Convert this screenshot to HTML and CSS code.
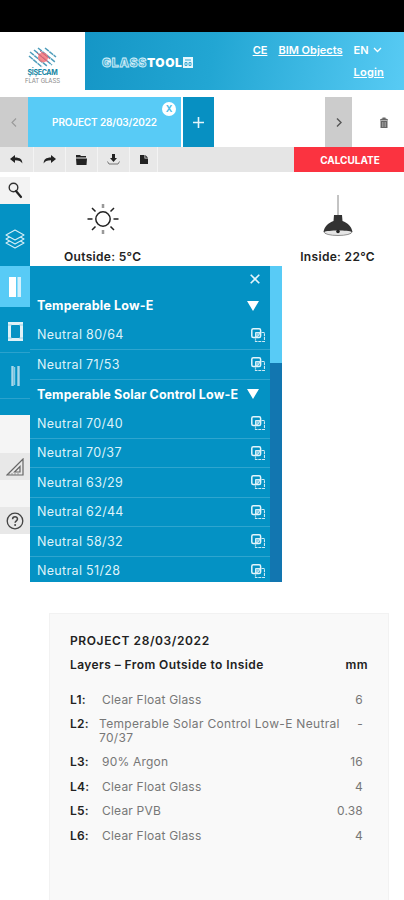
FILE: index.html
```
<!DOCTYPE html>
<html lang="en">

<head>
    <meta charset="utf-8">
    <title>Glasstool</title>
    <link rel="stylesheet" href="styles.css">
</head>

<body>
    <!-- shared icon for the glass rows -->
    <svg class="sprite" aria-hidden="true">
        <symbol id="add-layer" viewBox="0 0 14 14">
            <path d="M10.500 4.500h3v9h-9v-3" fill="none" stroke="#cfeaf5" stroke-width="1.2" stroke-dasharray="3 .8"/>
            <rect x=".8" y=".8" width="8.8" height="8.8" rx="1.500" fill="none" stroke="#e4f5fb" stroke-width="1.5"/>
            <path d="M4.500 9V4.500H9L7.500 8z" fill="#8acde6" stroke="#d5eff8"/>
        </symbol>
    </svg>

    <div class="status-bar"></div>

    <header class="header">
        <a class="brand">
            <svg width="30" height="21" viewBox="0 0 30 21">
                <g fill="none" stroke="#4e9dbb" stroke-width="1.5" stroke-dasharray="5 .6">
                    <path d="M1 9l13 11M2 5l17 14M6 3l18 15M10 1l17 14M17 1l11 9"/>
                </g>
                <circle cx="15" cy="10.500" r="5" fill="#f47579" opacity=".85"/>
                <path d="M9 6l11 9M12 4l10 8" stroke="#cf5f79" stroke-width="1"/>
            </svg>
            <span class="brand-name">ŞİŞECAM</span>
            <span class="brand-sub">FLAT GLASS</span>
        </a>
        <div class="banner">
            <div class="product"><span class="product-outline">GLASS</span><span class="product-solid">TOOL</span>
                <svg width="10" height="11" viewBox="0 0 10 11"><path d="M0 0h10v11H0z" fill="#e7f7fd"/><path d="M2 3h6M2 5.500h2v3H2zM6 5.500h2v3H6z" fill="none" stroke="#38a9d1"/></svg>
            </div>
            <nav class="nav">
                <a class="nav-link">CE</a>
                <a class="nav-link">BIM Objects</a>
                <span class="lang">EN <svg width="9" height="6" viewBox="0 0 9 6"><path d="M1 1l3.500 3.500L8 1" fill="none" stroke="#fff" stroke-width="1.3"/></svg></span>
                <a class="nav-link login">Login</a>
            </nav>
        </div>
    </header>

    <div class="tabs">
        <button class="tab-arrow prev"><svg width="6" height="9" viewBox="0 0 6 9"><path d="M5 .5l-4 4 4 4" fill="none" stroke="#999" stroke-width="1.1"/></svg></button>
        <div class="tab"><span class="tab-name">PROJECT 28/03/2022</span><span class="tab-close">X</span></div>
        <button class="tab-add"><svg width="11" height="11" viewBox="0 0 11 11"><path d="M5.500 0v11M0 5.500h11" stroke="#e5f5fb" stroke-width="1.6"/></svg></button>
        <button class="tab-arrow next"><svg width="6" height="9" viewBox="0 0 6 9"><path d="M1 .5l4 4-4 4" fill="none" stroke="#555" stroke-width="1.4"/></svg></button>
        <button class="trash"><svg width="8" height="11" viewBox="0 0 8 11"><path d="M2.500 1.500V.5h3v1M0 3.500V2.500q4-2.500 8 0v1zM.5 4h7v7h-7z" fill="#666"/><path d="M2.500 5v5M4 5v5M5.500 5v5" stroke="#aaa" stroke-width=".7"/></svg></button>
    </div>

    <div class="toolbar">
        <button class="tool"><svg width="13" height="9" viewBox="0 0 13 9"><path d="M0 4L5 0v2.500c5 0 7.500 2 7.300 6C11 6 9 5.300 5 5.300V8z" fill="#222"/></svg></button>
        <button class="tool"><svg width="13" height="9" viewBox="0 0 13 9"><path d="M13 4L8 0v2.500C3 2.500.5 4.500.7 8.500 2 6 4 5.300 8 5.300V8z" fill="#222"/></svg></button>
        <button class="tool"><svg width="11" height="10" viewBox="0 0 11 10"><path d="M0 0h4l1 1h5v1.500H0zM0 3.500h11L10.500 10H.5z" fill="#222"/></svg></button>
        <button class="tool"><svg width="13" height="11" viewBox="0 0 13 11"><path d="M5 0h3v4h2L6.500 8 3 4h2z" fill="#222"/><path d="M.5 7.500L2 10h9l1.500-2.500" fill="none" stroke="#777"/></svg></button>
        <button class="tool small"><svg width="8" height="9" viewBox="0 0 8 9"><path d="M0 0h4.500v3.500H8V9H0zM5.300 0L8 2.700H5.300z" fill="#222"/></svg></button>
        <button class="calculate">CALCULATE</button>
    </div>

    <div class="workspace">
        <aside class="sidebar">
            <div class="side search"><svg width="15" height="17" viewBox="0 0 15 17"><circle cx="5.500" cy="5.500" r="4.300" fill="none" stroke="#333" stroke-width="1.4"/><path d="M8 9l5 6" stroke="#222" stroke-width="2.200" stroke-linecap="round"/></svg></div>
            <div class="side layers"><svg width="20" height="20" viewBox="0 0 20 20"><g fill="#0492c4" stroke="#d5eef7" stroke-width="1.1" stroke-linejoin="round"><path d="M1 14l9-5 9 5-9 5z"/><path d="M1 10l9-5 9 5-9 5z"/><path d="M1 6l9-5 9 5-9 5z"/></g></svg></div>
            <div class="side active"><svg width="12" height="20" viewBox="0 0 12 20"><path d="M0 0h7v20H0z" fill="#fff"/><path d="M8.500 0H12v20H8.500z" fill="#d4f1fd"/></svg></div>
            <div class="side window"><svg width="15" height="19" viewBox="0 0 15 19"><path d="M1.500 1.500h12v16h-12z" fill="none" stroke="#dff1f7" stroke-width="3"/><path d="M0 3h4M11 3h4M0 16h4M11 16h4" stroke="#8ccbe2" stroke-width=".8"/></svg></div>
            <div class="side"><svg width="9" height="20" viewBox="0 0 9 20"><path d="M1.500 0v20M7.500 0v20" stroke="#a8d7e9" stroke-width="2.400"/><path d="M3.700 1v18" stroke="#d7eef7" stroke-width=".8"/></svg></div>
            <div class="side-end"></div>
            <div class="side-gap first"></div>
            <div class="side gray"><svg width="18" height="18" viewBox="0 0 18 18"><path d="M1 17L17 1v16zM8.500 14L14 8.500V14z" fill="none" stroke="#666" stroke-width="1.2"/><path d="M3 17v-2M6 17v-2M9 17v-2M12 17v-2" stroke="#888" stroke-width=".8"/></svg></div>
            <div class="side-gap"></div>
            <div class="side gray"><svg width="18" height="18" viewBox="0 0 18 18"><circle cx="9" cy="9" r="7.800" fill="none" stroke="#444" stroke-width="1.3"/><path d="M6.600 7.200c0-3.200 4.900-3.100 4.900-.2 0 1.800-2.400 1.900-2.400 3.800" fill="none" stroke="#444" stroke-width="1.500"/><circle cx="9.100" cy="13" r="1" fill="#444"/></svg></div>
        </aside>

        <main class="main">
            <div class="climate">
                <div class="side-info outside">
                    <svg width="32" height="32" viewBox="0 0 32 32">
                        <circle cx="16" cy="16" r="7.200" fill="none" stroke="#222" stroke-width="1.500"/>
                        <path d="M.5 16h5M26.500 16h5M5 5l3.500 3.500M27 5l-3.500 3.500M5 27l3.500-3.500M27 27l-3.500-3.500" stroke="#222" stroke-width="1.500"/>
                        <path d="M16 1v4M16 27v4" stroke="#999" stroke-width="2.500"/>
                    </svg>
                    <span>Outside: 5°C</span>
                </div>
                <div class="side-info inside">
                    <svg width="30" height="42" viewBox="0 0 30 42">
                        <path d="M15 0v21" stroke="#888"/>
                        <ellipse cx="15" cy="37" rx="14" ry="3.500" fill="#e5e5e5" stroke="#777" stroke-width=".8"/>
                        <path d="M11 20h8l.5 6c5 2 9 5 10 11-5-2-24-2-29 0 1-6 5-9 10-11z" fill="#333"/>
                        <circle cx="15" cy="36.500" r="1.800" fill="#222"/>
                    </svg>
                    <span>Inside: 22°C</span>
                </div>
            </div>

            <div class="panel">
                <div class="panel-list">
                    <div class="panel-close"><svg width="10" height="10" viewBox="0 0 10 10"><path d="M.7.7l8.600 8.600M9.300.7L.7 9.300" stroke="#e5f5fb" stroke-width="1.600"/></svg></div>
                    <div class="group">Temperable Low-E<i class="caret"></i></div>
                    <div class="item">Neutral 80/64<svg class="add"><use href="#add-layer"/></svg></div>
                    <div class="item">Neutral 71/53<svg class="add"><use href="#add-layer"/></svg></div>
                    <div class="group">Temperable Solar Control Low-E<i class="caret"></i></div>
                    <div class="item">Neutral 70/40<svg class="add"><use href="#add-layer"/></svg></div>
                    <div class="item">Neutral 70/37<svg class="add"><use href="#add-layer"/></svg></div>
                    <div class="item">Neutral 63/29<svg class="add"><use href="#add-layer"/></svg></div>
                    <div class="item">Neutral 62/44<svg class="add"><use href="#add-layer"/></svg></div>
                    <div class="item">Neutral 58/32<svg class="add"><use href="#add-layer"/></svg></div>
                    <div class="item">Neutral 51/28<svg class="add"><use href="#add-layer"/></svg></div>
                </div>
                <div class="scrollbar"><div class="thumb"></div></div>
            </div>

            <section class="summary">
                <h1 class="summary-title">PROJECT 28/03/2022</h1>
                <div class="summary-head"><span class="summary-label">Layers – From Outside to Inside</span><span class="unit">mm</span></div>
                <div class="layer"><b>L1:</b><span class="name">Clear Float Glass</span><span class="mm">6</span></div>
                <div class="layer long"><b>L2:</b><span class="name">Temperable Solar Control Low-E Neutral<br>70/37</span><span class="mm">-</span></div>
                <div class="layer"><b>L3:</b><span class="name">90% Argon</span><span class="mm">16</span></div>
                <div class="layer"><b>L4:</b><span class="name">Clear Float Glass</span><span class="mm">4</span></div>
                <div class="layer"><b>L5:</b><span class="name">Clear PVB</span><span class="mm">0.38</span></div>
                <div class="layer"><b>L6:</b><span class="name">Clear Float Glass</span><span class="mm">4</span></div>
            </section>
        </main>
    </div>
</body>

</html>
```
FILE: styles.css
```
* {
    box-sizing: border-box;
}

body {
    margin: 0;
    height: 900px;
    overflow: hidden;
    display: flex;
    flex-direction: column;
    background: #fff;
    color: #222;
    font-family: Inter, "Liberation Sans", sans-serif;
    font-size: 12px;
}

svg {
    display: block;
    flex-shrink: 0;
}

button {
    border: 0;
    padding: 0;
    font-family: inherit;
    display: flex;
    align-items: center;
    justify-content: center;
}

.sprite {
    width: 0;
    height: 0;
    position: absolute;
}

.status-bar {
    height: 32px;
    background: #000;
    flex-shrink: 0;
}

/* header */
.header {
    display: flex;
    height: 58px;
    margin-bottom: 7px;
    flex-shrink: 0;
}

.brand {
    width: 85px;
    display: flex;
    flex-direction: column;
    align-items: center;
    padding-top: 15px;
}

.brand-name {
    font-size: 7px;
    line-height: 8px;
    font-weight: 700;
    letter-spacing: -0.3px;
    color: #1685a3;
    margin-top: 1px;
}

.brand-sub {
    font-size: 6px;
    line-height: 7px;
    color: #888;
    letter-spacing: -0.1px;
}

.banner {
    flex: 1;
    display: flex;
    justify-content: space-between;
    padding: 11px 20px 0 17px;
    background: linear-gradient(100deg, #1596c6, #22a6d3 40%, #58cbf4);
}

.product {
    display: flex;
    align-items: center;
    height: 16px;
    margin-top: 11px;
    font-size: 12px;
    font-weight: 900;
}

.product-outline {
    color: #46aed4;
    -webkit-text-stroke: 0.8px #d9f1fa;
    letter-spacing: 0.8px;
}

.product-solid {
    color: #fff;
    letter-spacing: 0.5px;
    margin-right: 1px;
}

.nav {
    display: grid;
    grid-template-columns: auto auto auto;
    column-gap: 11px;
    align-content: start;
    color: #fff;
    font-size: 11px;
    font-weight: 600;
    line-height: 14px;
    row-gap: 8px;
}

.nav-link {
    text-decoration: underline;
}

.lang {
    display: flex;
    align-items: center;
    gap: 4px;
}

.login {
    grid-column: 3;
    justify-self: end;
    letter-spacing: 0.2px;
}

/* project tabs */
.tabs {
    display: flex;
    height: 50px;
    flex-shrink: 0;
}

.tab-arrow {
    width: 28px;
    background: #ccc;
}

.next {
    width: 27px;
    margin-left: 111px;
}

.tab {
    width: 153px;
    margin-right: 2px;
    position: relative;
    display: flex;
    align-items: center;
    justify-content: center;
    background: #58cbf6;
}

.tab-name {
    color: #fff;
    font-size: 10px;
    font-weight: 600;
    letter-spacing: -0.15px;
}

.tab-close {
    position: absolute;
    top: 5px;
    right: 5px;
    width: 14px;
    height: 14px;
    border-radius: 50%;
    background: #fff;
    color: #4dbde8;
    font-size: 9px;
    font-weight: 700;
    line-height: 14px;
    text-align: center;
}

.tab-add {
    width: 31px;
    background: #0790c2;
}

.trash {
    flex: 1;
    background: #fff;
    padding-left: 11px;
}

/* toolbar */
.toolbar {
    display: flex;
    height: 25px;
    flex-shrink: 0;
    background: #e5e5e5;
}

.tool {
    width: 32px;
    background: #e8e8e8;
    border-right: 1px solid #f3f3f3;
}

.tool:first-child {
    width: 34px;
}

.small {
    width: 28px;
}

.calculate {
    width: 110px;
    margin-left: auto;
    padding-left: 2px;
    background: #fb3340;
    color: #fff;
    font-size: 10px;
    font-weight: 700;
}

/* left sidebar */
.workspace {
    display: flex;
    flex: 1;
    min-height: 0;
}

.sidebar {
    width: 30px;
    padding-top: 5px;
    flex-shrink: 0;
}

.side {
    height: 46px;
    display: flex;
    align-items: center;
    justify-content: center;
    background: #0492c4;
    border-bottom: 1px solid #2ba2cd;
}

.side.search {
    height: 27px;
    background: #f3f3f3;
    border: 0;
}

.side.layers {
    height: 62px;
    border: 0;
    padding-top: 8px;
}

.side.active {
    height: 41px;
    background: #58cbf6;
    border: 0;
}

.side.window {
    padding-top: 4px;
}

.side-end {
    height: 16px;
    background: #0492c4;
}

.side-gap {
    height: 27px;
    background: #f5f5f5;
}

.side-gap.first {
    height: 38px;
}

.side.gray {
    height: 27px;
    background: #e8e8e8;
    border: 0;
}

.main {
    flex: 1;
    display: flex;
    flex-direction: column;
}

.climate {
    height: 94px;
    flex-shrink: 0;
    display: flex;
    justify-content: space-between;
    padding: 0 29px 0 34px;
    font-weight: 600;
    letter-spacing: 0.32px;
}

.side-info {
    display: flex;
    flex-direction: column;
    align-items: center;
    justify-content: flex-end;
    line-height: 16px;
    padding-bottom: 1px;
}

.outside {
    gap: 14px;
}

.inside {
    gap: 12px;
}

/* glass list */
.panel {
    width: 252px;
    height: 316px;
    flex-shrink: 0;
    display: flex;
    overflow: hidden;
    background: #0492c4;
    color: #fff;
}

.panel-list {
    flex: 1;
}

.panel-close {
    height: 25px;
    display: flex;
    align-items: center;
    justify-content: flex-end;
    padding-right: 10px;
}

.group,
.item {
    height: 29.5px;
    display: flex;
    align-items: center;
    justify-content: space-between;
    padding: 0 5px 0 7px;
    font-size: 12.5px;
}

.group {
    font-weight: 700;
    letter-spacing: 0.15px;
    padding-right: 11px;
}

.item {
    color: #dff2f9;
    letter-spacing: 0.33px;
    border-bottom: 1px solid #2fa5cf;
}

.caret {
    border: 6px solid transparent;
    border-top: 10px solid #fff;
    border-bottom: 0;
}

.add {
    width: 14px;
    height: 14px;
}

.scrollbar {
    width: 12px;
    background: #1276b0;
}

.thumb {
    height: 97px;
    background: #58cbf6;
}

/* layer summary */
.summary {
    flex: 1;
    margin: 31px 15px 0 19px;
    padding: 18px 20px 0 20px;
    background: #f9f9f9;
    border: 1px solid #f2f2f2;
    border-bottom: 0;
}

.summary-title {
    margin: 0;
    font-size: 12px;
    font-weight: 600;
    letter-spacing: 0.6px;
    line-height: 18px;
}

.summary-head {
    display: flex;
    justify-content: space-between;
    margin: 6px 0 14px;
    font-weight: 600;
    letter-spacing: 0.42px;
    line-height: 18px;
}

.layer {
    display: flex;
    height: 24.4px;
    padding-right: 5px;
    line-height: 14px;
    padding-top: 5px;
    color: #777;
    letter-spacing: 0.2px;
}

.layer b {
    width: 32px;
    color: #222;
    font-weight: 600;
}

.layer.long {
    height: 38px;
}

.long .name {
    margin-left: -3px;
    white-space: nowrap;
    letter-spacing: 0.32px;
}

.mm {
    margin-left: auto;
}
```
